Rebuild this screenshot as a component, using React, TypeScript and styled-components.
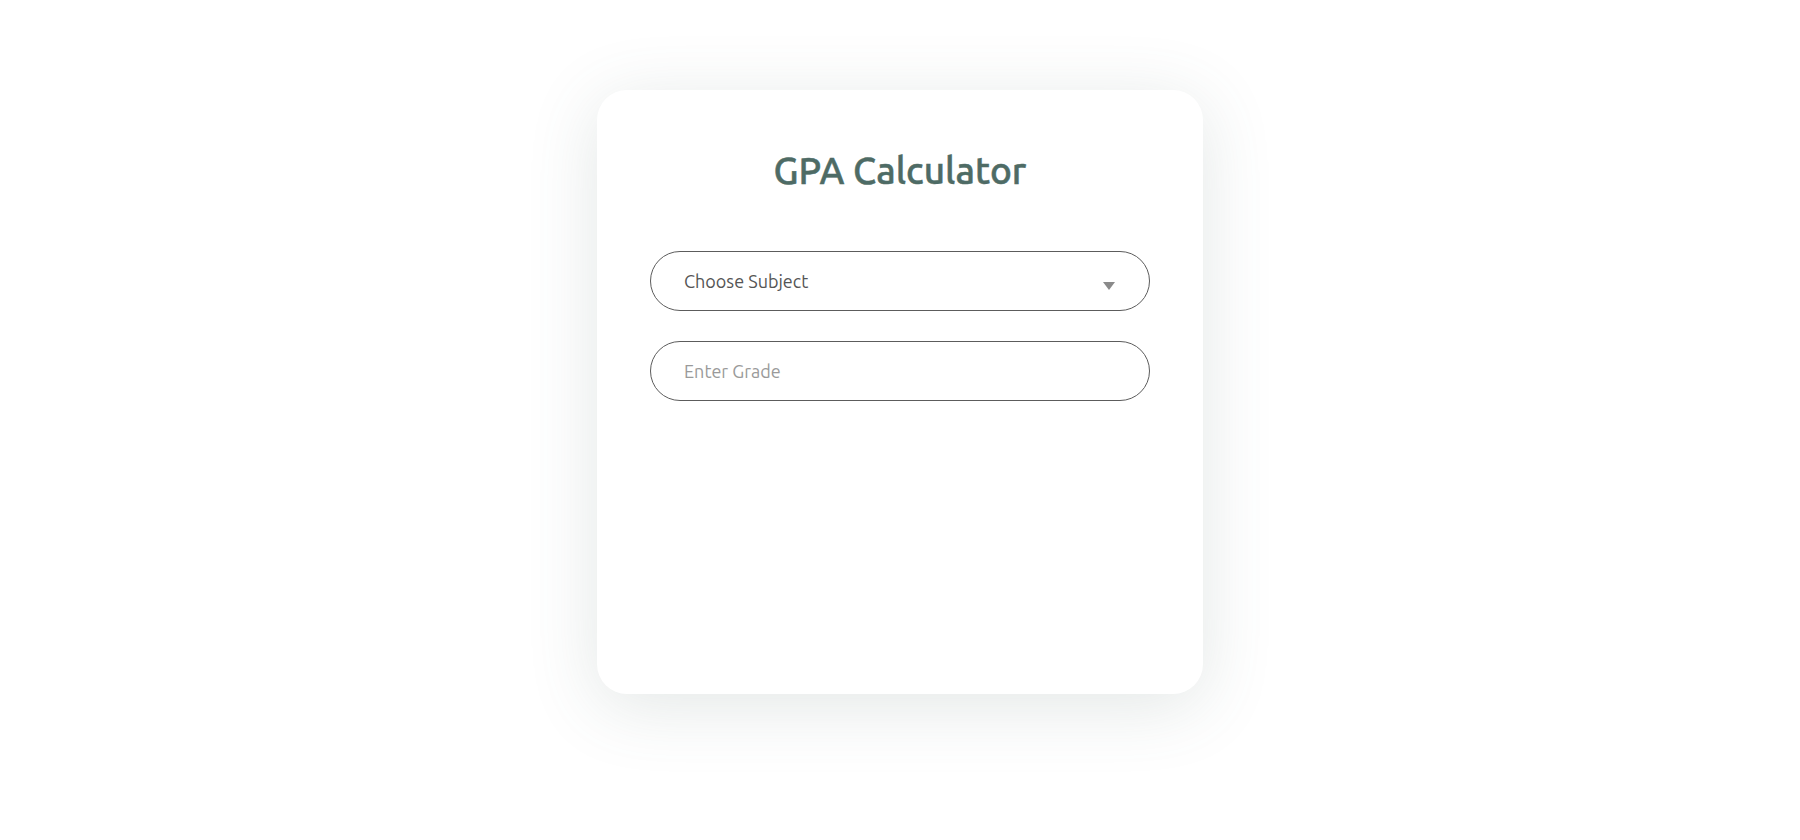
import React from "react";
import styled, { createGlobalStyle } from "styled-components";

const Global = createGlobalStyle`
  html, body { margin: 0; padding: 0; background: #ffffff; }
  body { font-family: "Ubuntu", Lato, "Open Sans", sans-serif; }
  * { box-sizing: border-box; }
`;

const Page = styled.div`
  width: 100%;
  min-height: 840px;
  display: flex;
  justify-content: center;
  align-items: flex-start;
  padding-top: 90px;
`;

const Card = styled.div`
  width: 606px;
  height: 604px;
  background: #ffffff;
  border-radius: 30px;
  box-shadow: 0 12px 70px rgba(80, 105, 98, 0.16);
  padding: 61px 53px 0;
  display: flex;
  flex-direction: column;
  align-items: stretch;
`;

const Title = styled.h1`
  margin: 0 0 60px;
  text-align: center;
  font-family: "Ubuntu", Lato, "Open Sans", sans-serif;
  font-weight: 500;
  font-size: 37px;
  line-height: 40px;
  color: #4e6b65;
  -webkit-text-stroke: 0.5px #4e6b65;
`;

const Field = styled.div`
  position: relative;
  margin-bottom: 30px;
`;

const fieldBase = `
  width: 100%;
  height: 60px;
  border: 1px solid #5c5c5c;
  border-radius: 30px;
  padding: 0 33px;
  font-family: "Ubuntu", Lato, "Open Sans", sans-serif;
  font-size: 18px;
  background: #ffffff;
  outline: none;
`;

const Select = styled.select`
  ${fieldBase}
  appearance: none;
  -webkit-appearance: none;
  color: #555555;
`;

const Input = styled.input`
  ${fieldBase}
  color: #555555;
  &::placeholder { color: #9a9a9a; }
`;

const Arrow = styled.svg`
  position: absolute;
  right: 35px;
  top: 31px;
  width: 12px;
  height: 8px;
  pointer-events: none;
`;

export default function App() {
  return (
    <>
      <Global />
      <Page>
        <Card>
          <Title>GPA Calculator</Title>
          <Field>
            <Select defaultValue="">
              <option value="" disabled>
                Choose Subject
              </option>
              <option value="math">Math</option>
              <option value="science">Science</option>
            </Select>
            <Arrow viewBox="0 0 12 8">
              <path d="M0 0 L12 0 L6 8 Z" fill="#8a8a8a" />
            </Arrow>
          </Field>
          <Field>
            <Input placeholder="Enter Grade" />
          </Field>
        </Card>
      </Page>
    </>
  );
}
